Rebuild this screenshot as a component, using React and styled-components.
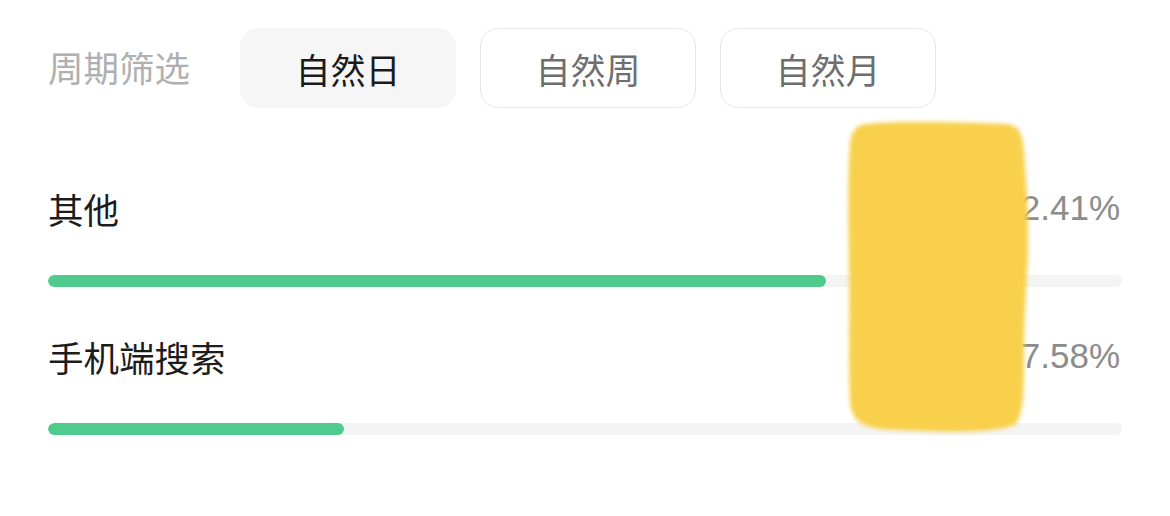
import React from "react";
import styled, { createGlobalStyle } from "styled-components";

const GlobalStyle = createGlobalStyle`
	html, body {
		margin: 0;
		padding: 0;
		background: #ffffff;
	}
	body {
		font-family: "Noto Sans CJK SC", "Noto Sans", sans-serif;
	}
`;

const Page = styled.div`
	position: relative;
	width: 1170px;
	height: 516px;
	box-sizing: border-box;
	padding: 28px 48px 0 48px;
	overflow: hidden;
`;

const FilterBar = styled.div`
	display: flex;
	align-items: center;
	height: 80px;
`;

const FilterLabel = styled.div`
	width: 192px;
	font-size: 35.5px;
	color: #b0b0b0;
	line-height: 1;
	margin-top: -3px;
`;

const Tabs = styled.div`
	display: flex;
	gap: 24px;
`;

const Tab = styled.div`
	width: 216px;
	height: 80px;
	box-sizing: border-box;
	display: flex;
	align-items: center;
	justify-content: center;
	border-radius: 18px;
	font-size: 35px;
	background: ${(p) => (p.active ? "#f6f6f6" : "#ffffff")};
	border: 1.5px solid ${(p) => (p.active ? "#f6f6f6" : "#e6e6e6")};
	color: ${(p) => (p.active ? "#1a1a1a" : "#6e6e6e")};
`;

const List = styled.div`
	margin-top: 75px;
	display: flex;
	flex-direction: column;
	gap: 44px;
`;

const Row = styled.div`
	display: flex;
	flex-direction: column;
	gap: 42px;
`;

const RowHead = styled.div`
	display: flex;
	justify-content: space-between;
	align-items: center;
	height: 50px;
`;

const Name = styled.div`
	font-size: 35.5px;
	color: #1c1c1c;
`;

const Percent = styled.div`
	font-family: "Liberation Sans", Arial, sans-serif;
	font-size: 35px;
	color: #8c8c8c;
	padding-right: 2px;
`;

const Track = styled.div`
	height: 12px;
	border-radius: 6px;
	background: #f4f4f4;
	overflow: hidden;
`;

const Fill = styled.div`
	height: 100%;
	border-radius: 6px;
	background: #4fcb8e;
`;

const Marker = styled.svg`
	position: absolute;
	left: 836px;
	top: 112px;
	width: 204px;
	height: 332px;
	pointer-events: none;
`;

const rows = [
	{ name: "其他", value: 72.41 },
	{ name: "手机端搜索", value: 27.58 },
];

function Highlight() {
	return (
		<Marker viewBox="0 0 204 332">
			<defs>
				<filter id="soft" x="-10%" y="-10%" width="120%" height="120%">
					<feGaussianBlur stdDeviation="2.2" />
				</filter>
			</defs>
			<path
				filter="url(#soft)"
				fill="#f8d04b"
				d="M30 12 C60 9 120 10 170 12 C184 13 186 22 188 40 C190 70 193 100 192 140 C191 170 188 200 188 240 C188 280 188 300 180 312 C160 322 110 320 60 318 C30 317 16 312 14 290 C12 250 14 200 13 150 C12 100 12 60 14 32 C15 20 20 13 30 12 Z"
			/>
		</Marker>
	);
}

export default function App() {
	return (
		<>
			<GlobalStyle />
			<Page>
				<FilterBar>
					<FilterLabel>周期筛选</FilterLabel>
					<Tabs>
						<Tab active>自然日</Tab>
						<Tab>自然周</Tab>
						<Tab>自然月</Tab>
					</Tabs>
				</FilterBar>
				<List>
					{rows.map((r) => (
						<Row key={r.name}>
							<RowHead>
								<Name>{r.name}</Name>
								<Percent>{r.value.toFixed(2)}%</Percent>
							</RowHead>
							<Track>
								<Fill style={{ width: `${r.value}%` }} />
							</Track>
						</Row>
					))}
				</List>
				<Highlight />
			</Page>
		</>
	);
}
